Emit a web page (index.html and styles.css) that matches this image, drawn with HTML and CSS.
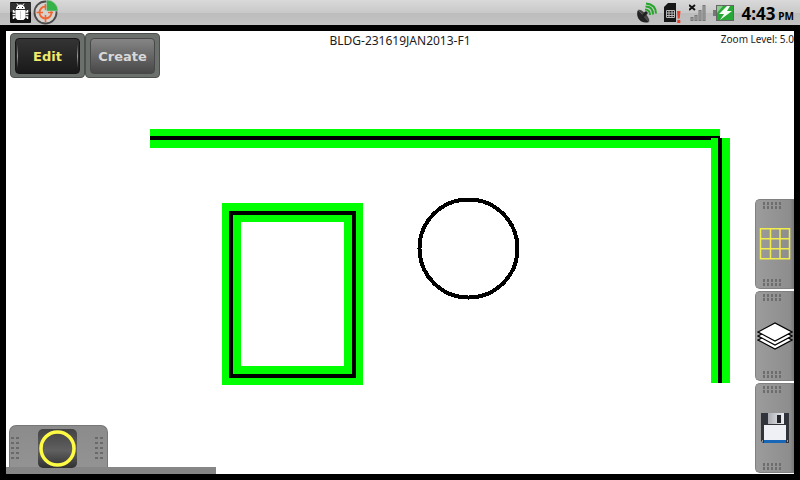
FILE: index.html
```html
<!DOCTYPE html>
<html lang="en">
<head>
<meta charset="utf-8">
<title>BLDG-231619JAN2013-F1</title>
<meta name="viewport" content="width=device-width, initial-scale=1">
<link rel="stylesheet" href="styles.css">
</head>
<body>
<header class="status">
  <div class="status-group">
    <svg width="21" height="21" viewBox="0 0 21 21" aria-hidden="true">
      <rect width="21" height="21" rx="1" fill="#101010"/>
      <path d="M0 1h21v9H0z" fill="#303030"/>
      <path d="M6 7a4.500 4.500 0 0 1 9 0zM5.500 8h10v8l-2 2h-6l-2-2z" fill="#fff"/>
      <path d="M7 1.500l1.500 2M14 1.500l-1.500 2" stroke="#fff"/>
      <path d="M5.500 10H3.500V8M5.500 12.500h-3M5.500 15h-2v2M15.500 10h2V8M15.500 12.500h3M15.500 15h2v2" fill="none" stroke="#fff" stroke-width="1.500"/>
      <path d="M8 5h1v1H8zM12 5h1v1h-1z" fill="#222"/>
      <path d="M10.500 9v8" stroke="#ccc"/>
    </svg>
    <svg width="26" height="25" viewBox="0 0 26 25" aria-hidden="true">
      <circle cx="12.500" cy="12.500" r="11" fill="#d6d2d0" stroke="#4c4c4c" stroke-width="1.800"/>
      <circle cx="12.500" cy="12.500" r="6" fill="none" stroke="#f0672f" stroke-width="1.800"/>
      <path d="M12.500 4v6M12.500 15v7M3.500 12.500H10M15 12.500h5" stroke="#f0672f" stroke-width="1.600"/>
      <path d="M13.500 11V0a11 11 0 0 1 11.500 11z" fill="#35b34a" stroke="#cfcfcf" stroke-width=".5"/>
    </svg>
  </div>
  <div class="status-group status-right">
    <svg width="21" height="22" viewBox="0 0 21 22" aria-hidden="true">
      <path d="M2 8C-1 14 4 23 13 20z" fill="#242424"/>
      <path d="M2 8l11 12c1-2-1-6-4-9S3 7 2 8z" fill="#454545"/>
      <path d="M6 15l4-4" stroke="#222" stroke-width="2.500"/>
      <circle cx="10" cy="11" r="1.700" fill="#222"/>
      <path d="M9 7.500q5 0 5 5.500M9.500 4.500q7.500 0 7.500 8M10 1.500q10 1 10 10" fill="none" stroke="#27a52c" stroke-width="2"/>
    </svg>
    <svg width="18" height="22" viewBox="0 0 18 22" aria-hidden="true">
      <path d="M0 5l4-4h8v19H0z" fill="#171717"/>
      <path d="M2.500 8.500h8v7h-8zM2.500 11h8M2.500 13.500h8M5 8.500v7M8 8.500v7" fill="none" stroke="#b8b8b8"/>
      <path d="M13 9h3.500l-.8 7.500h-2zM13.300 18h3v3h-3z" fill="#e8412d"/>
    </svg>
    <svg width="17" height="18" viewBox="0 0 17 18" aria-hidden="true">
      <path d="M0 1l6 5M6 1L0 6" stroke="#111" stroke-width="2"/>
      <path d="M3 13v4M7 11v6M11 6v11M15 1v16" stroke="#777" stroke-width="3"/>
      <path d="M3 14v2M7 12v4M11 7v9M15 2v14" stroke="#aaa"/>
    </svg>
    <svg width="21" height="18" viewBox="0 0 21 18" aria-hidden="true">
      <path d="M0 6h3v6H0z" fill="#777"/>
      <rect x="3.500" y="1.500" width="17" height="15" fill="#28a937" stroke="#666"/>
      <path d="M4 2h6L4 9z" fill="#8dcc91"/>
      <path d="M14 2L6 10h5l-4 6 12-9h-5l3-5z" fill="#f5fff5"/>
    </svg>
    <time class="clock" datetime="16:43"><span>4:43</span><small>PM</small></time>
  </div>
</header>
<main class="workspace">
  <svg class="plan" viewBox="6 31 788 443" preserveAspectRatio="xMinYMin meet" role="img" aria-label="Floor plan" shape-rendering="crispEdges">
    <path d="M150 129h570v19H150z" fill="#0f0"/>
    <path d="M150 136h570v4H150z"/>
    <path d="M711 138h19v245h-19z" fill="#0f0"/>
    <path d="M718 138h4v245h-4z"/>
    <path d="M222 203h141v182H222zM241 222v144h103V222z" fill="#0f0" fill-rule="evenodd"/>
    <path d="M229 211h127v167H229zM233 215v159h119V215z" fill-rule="evenodd"/>
    <circle cx="468.500" cy="248.500" r="49" fill="none" stroke="#000" stroke-width="4"/>
  </svg>
  <div class="topbar">
    <nav class="modes">
      <button class="mode mode-active" type="button"><span>Edit</span></button>
      <button class="mode" type="button"><span>Create</span></button>
    </nav>
    <h1 class="title">BLDG-231619JAN2013-F1</h1>
    <p class="zoom">Zoom Level: 5.0</p>
  </div>
  <div class="docks">
    <div class="tray">
      <div class="tray-tab">
        <i class="grip-tall"></i>
        <button class="shape" type="button" aria-label="Circle">
          <svg width="39" height="39" viewBox="0 0 39 39"><circle cx="19.500" cy="19.500" r="16.500" fill="none" stroke="#fffb45" stroke-width="3.500"/></svg>
        </button>
        <i class="grip-tall"></i>
      </div>
    </div>
    <aside class="tabs">
      <button class="tab" type="button" aria-label="Grid">
        <i class="grip"></i>
        <svg width="32" height="32" viewBox="0 0 32 32"><path d="M1.500 .8h29v30h-29zM11.500 .8v30M21 .8v30M1.500 10.800h29M1.500 20.800h29" fill="none" stroke="#f1ed4c" stroke-width="1.500"/></svg>
        <i class="grip"></i>
      </button>
      <button class="tab" type="button" aria-label="Layers">
        <i class="grip"></i>
        <svg width="36" height="30" viewBox="0 0 36 30"><g fill="#fff" stroke="#000" stroke-width="1.200"><path d="M1 19l17-9 17 9-17 9z"/><path d="M1 15l17-9 17 9-17 9z"/><path d="M1 11l17-9 17 9-17 9z"/></g></svg>
        <i class="grip"></i>
      </button>
      <button class="tab" type="button" aria-label="Save">
        <i class="grip"></i>
        <svg width="30" height="32" viewBox="0 0 30 32">
          <defs><linearGradient id="metal"><stop stop-color="#a9acb2"/><stop offset="1" stop-color="#eceef2"/></linearGradient></defs>
          <path d="M1 1h28v30H3l-2-2z" fill="#30343a"/>
          <path d="M8 1h16v11H8z" fill="url(#metal)"/><path d="M17 3h4v8h-4z" fill="#202328"/>
          <path d="M4 13h22v15H4z" fill="#eef0f5"/><path d="M4 28h22v3H4z" fill="#1766b8"/>
          <path d="M2 28h1v2H2zM27 28h1v2h-1z" fill="#999"/>
        </svg>
        <i class="grip"></i>
      </button>
    </aside>
  </div>
</main>
</body>
</html>
```

FILE: styles.css
```css
* {
  box-sizing: border-box;
}

body {
  margin: 0;
  min-height: 100vh;
  display: flex;
  flex-direction: column;
  background: #000;
  color: #1c1c1c;
  font-family: "Noto Sans", "Open Sans", sans-serif;
}

svg {
  display: block;
  flex: none;
}

button {
  margin: 0;
  padding: 0;
  border: 0;
  cursor: pointer;
}

.status {
  display: flex;
  justify-content: space-between;
  height: 25px;
  padding: 0 6px 0 10px;
  background: linear-gradient(#d9d9d9, #c9c9c9 50%, #bdbdbd 52%, #c3c3c3);
}

.status-group {
  display: flex;
  align-items: center;
  gap: 2px;
}

.status-right {
  gap: 7px;
}

.clock {
  display: flex;
  align-items: baseline;
  gap: 3px;
  padding-top: 2px;
  color: #000;
  font-size: 17px;
  font-weight: 700;
  line-height: 24px;
}

.clock small {
  font-size: 10px;
  line-height: 12px;
}

.workspace {
  position: relative;
  flex: 1;
  display: flex;
  flex-direction: column;
  margin: 6px;
  background: #fff;
}

.plan {
  position: absolute;
  inset: 0;
  width: 100%;
  height: 100%;
}

.topbar {
  position: relative;
  display: grid;
  grid-template-columns: 1fr auto 1fr;
  align-items: start;
  padding-top: 2px;
}

.modes {
  display: flex;
  padding-left: 4px;
}

.mode {
  width: 75px;
  height: 45px;
  padding: 4px;
  border: 1px solid #4c504c;
  border-radius: 4px;
  background: #6b706c;
  color: #d8d8d8;
  font: bold 13px "DejaVu Sans", sans-serif;
}

.mode span {
  display: block;
  height: 36px;
  border: 1px solid #484848;
  border-radius: 4px;
  background: linear-gradient(#858585, #484848);
  line-height: 36px;
}

.mode-active {
  color: #f2ea6b;
}

.mode-active span {
  border-color: #151515;
  background:
    linear-gradient(transparent, #aaa43a, transparent) 1px 50% / 1px 24px no-repeat,
    linear-gradient(transparent, #aaa43a, transparent) 61px 50% / 1px 24px no-repeat,
    linear-gradient(#343434, #191919);
}

.title,
.zoom {
  margin: 0;
  font-weight: 400;
  font-size: 12px;
  line-height: 16px;
}

.zoom {
  font-size: 10px;
  line-height: 12px;
  text-align: right;
}

.docks {
  position: relative;
  flex: 1;
  display: flex;
  align-items: flex-end;
  justify-content: space-between;
}

.tray {
  width: 210px;
  border-bottom: 7px solid #868686;
}

.tray-tab {
  display: flex;
  align-items: center;
  justify-content: space-between;
  width: 99px;
  height: 42px;
  margin-left: 3px;
  padding: 4px 4px 0 1px;
  border: 1px solid #777;
  border-bottom: 0;
  border-radius: 7px 7px 0 0;
  background: linear-gradient(#8b8b8b, #939393);
}

.shape {
  height: 39px;
  border-radius: 5px;
  background: linear-gradient(#424242, #606060 55%, #303030);
}

.tabs {
  display: flex;
  flex-direction: column;
  gap: 2px;
  padding-bottom: 1px;
}

.tab {
  display: flex;
  flex-direction: column;
  align-items: center;
  justify-content: space-between;
  width: 39px;
  height: 90px;
  padding: 2px 0;
  border: 1px solid #808080;
  border-right: 0;
  border-radius: 5px 0 0 5px;
  background: linear-gradient(90deg, #9c9c9c, #8d8d8d 90%, #777);
}

.grip {
  width: 18px;
  height: 7px;
  margin-right: 6px;
  background:
    linear-gradient(#959595, #959595) 0 3px / 18px 1px no-repeat,
    repeating-linear-gradient(90deg, #6d6d6d 0 2px, transparent 2px 4px);
}

.grip-tall {
  width: 8px;
  height: 23px;
  background:
    linear-gradient(90deg, transparent 3px, #8f8f8f 3px 5px, transparent 5px),
    repeating-linear-gradient(#696969 0 2px, transparent 2px 5px);
}
```
